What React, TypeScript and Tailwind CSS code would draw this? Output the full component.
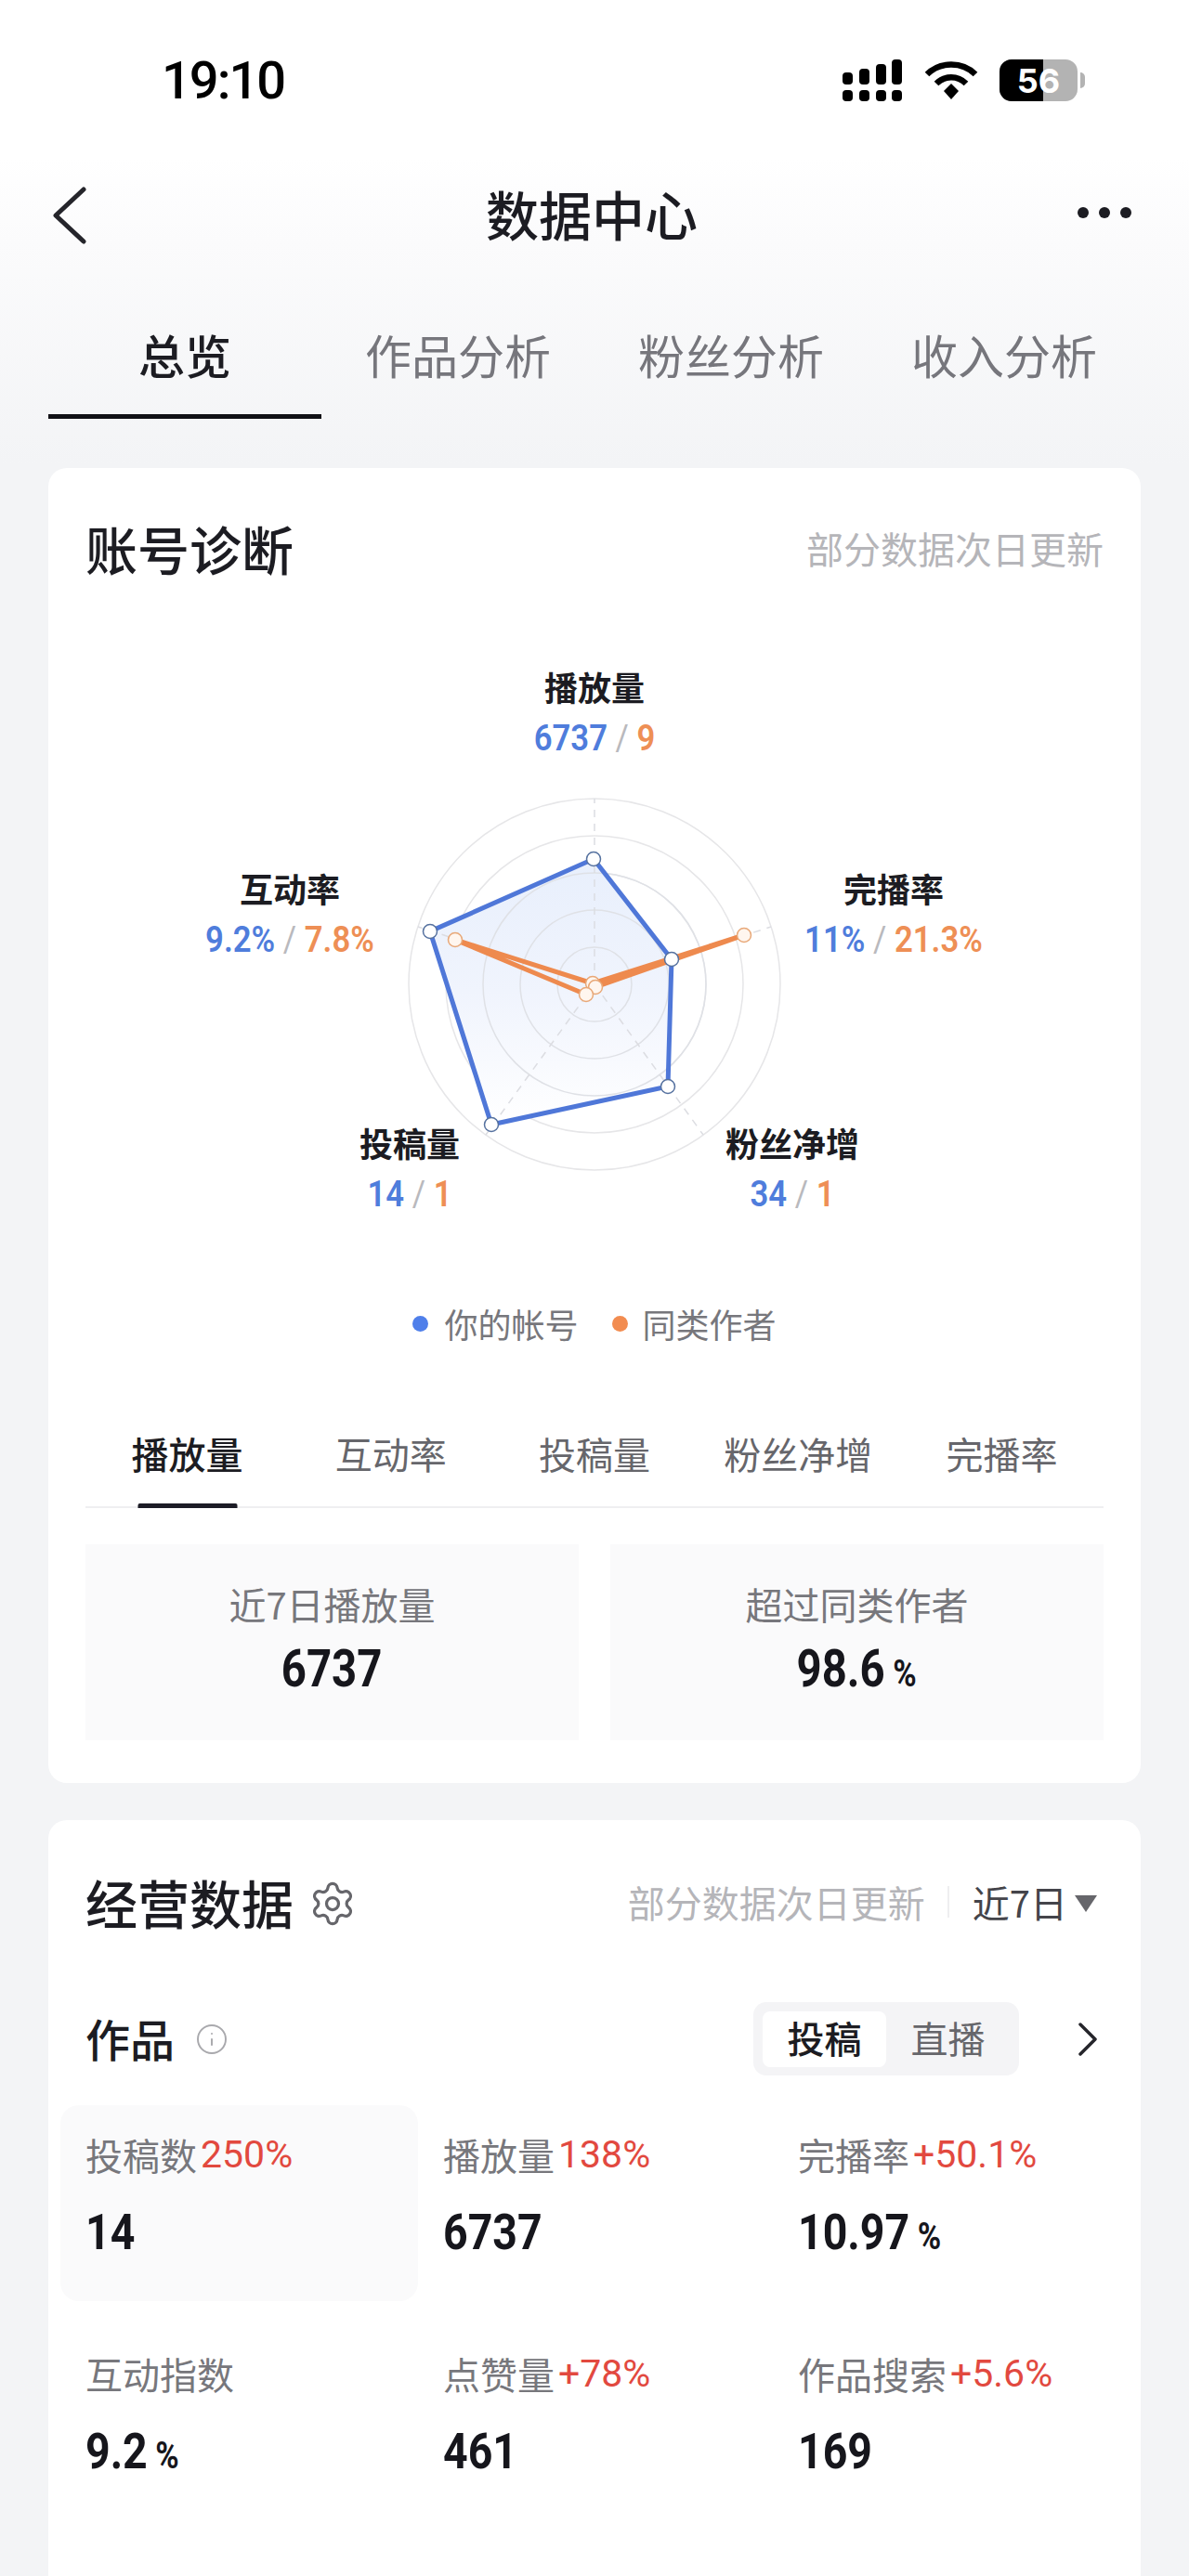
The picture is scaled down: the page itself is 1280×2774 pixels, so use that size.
import { Info, Settings } from "lucide-react";

const cjk = "font-['Noto_Sans_CJK_SC','Noto_Sans',sans-serif]";
// the app uses a condensed number face; Roboto squeezed on x gets close
const num = "font-['Roboto','Noto_Sans_CJK_SC',sans-serif]";

const mainTabs = ["总览", "作品分析", "粉丝分析", "收入分析"];
const subTabs = ["播放量", "互动率", "投稿量", "粉丝净增", "完播率"];

const metrics = [
  { label: "投稿数", delta: "250%", value: "14", active: true },
  { label: "播放量", delta: "138%", value: "6737" },
  { label: "完播率", delta: "+50.1%", value: "10.97", unit: "%" },
  { label: "互动指数", delta: "", value: "9.2", unit: "%" },
  { label: "点赞量", delta: "+78%", value: "461" },
  { label: "作品搜索", delta: "+5.6%", value: "169" },
];

// radar node coordinates, read off the screenshot
const bluePts = [
  [639, 925],
  [723, 1033],
  [719, 1170],
  [529, 1211],
  [463, 1003],
];
const orangePts = [
  [638, 1059],
  [801, 1007],
  [641, 1063],
  [631, 1071],
  [490, 1012],
];
const axisEnds = [
  [640, 860],
  [830, 998],
  [757, 1222],
  [523, 1222],
  [450, 998],
];

const toPoints = (pts: number[][]) => pts.map((p) => p.join(",")).join(" ");

function StatusBar() {
  return (
    <div className="relative flex h-[170px] items-center justify-between bg-white pl-[174px] pr-[112px] pt-[3px]">
      <span className="font-['Roboto',sans-serif] text-[56px] leading-none font-medium tracking-[-2px] text-black">19:10</span>
      <div className="flex items-center">
        <svg width="66" height="46" viewBox="0 0 66 46" fill="#000">
          <rect x="1" y="14" width="11" height="13" rx="4" />
          <rect x="19" y="10" width="11" height="17" rx="4" />
          <rect x="37" y="5" width="11" height="22" rx="4" />
          <rect x="54" y="0" width="11" height="27" rx="4" />
          <rect x="1" y="33" width="11" height="12" rx="4" />
          <rect x="19" y="33" width="11" height="12" rx="4" />
          <rect x="37" y="33" width="11" height="12" rx="4" />
          <rect x="54" y="33" width="11" height="12" rx="4" />
        </svg>
        <svg width="58" height="44" viewBox="0 0 58 44" fill="none" stroke="#000" className="ml-[23px]">
          <path d="M3 15 C17 1 41 1 55 15" strokeWidth="6.5" />
          <path d="M13 25 C22 16 36 16 45 25" strokeWidth="6.5" />
          <path d="M21 33 L29 25 L37 33 L29 42 Z" fill="#000" stroke="none" />
        </svg>
        <div className="relative ml-[23px] flex h-[45px] w-[84px] items-center justify-center overflow-hidden rounded-[13px] bg-[#b3b3b3]">
          <div className="absolute inset-y-0 left-0 w-[47px] bg-black" />
          <span className="relative font-['Inter',sans-serif] text-[36px] leading-none font-bold text-white">56</span>
        </div>
        <div className="ml-[3px] h-[17px] w-[5px] rounded-r-full bg-[#b3b3b3]" />
      </div>
    </div>
  );
}

function Radar() {
  return (
    <svg width="500" height="460" viewBox="390 830 500 460" className="absolute left-[298px] top-[148px]">
      <defs>
        <linearGradient id="radarFill" x1="0" y1="0" x2="0" y2="1">
          <stop offset="0" stopColor="#e8effc" />
          <stop offset="0.5" stopColor="#f0f4fd" />
          <stop offset="1" stopColor="#ffffff" />
        </linearGradient>
      </defs>
      {[40, 80, 120, 160, 200].map((r) => (
        <circle key={r} cx="640" cy="1060" r={r} fill="none" stroke="#e6e6e8" strokeWidth="1.5" />
      ))}
      <polygon points={toPoints(bluePts)} fill="url(#radarFill)" />
      {[40, 80, 120].map((r) => (
        <circle key={r} cx="640" cy="1060" r={r} fill="none" stroke="#dfe1e6" strokeWidth="1.5" />
      ))}
      {axisEnds.map(([x, y]) => (
        <line key={x} x1="640" y1="1060" x2={x} y2={y} stroke="#dcdde2" strokeWidth="1.5" strokeDasharray="8 7" />
      ))}
      <polygon points={toPoints(bluePts)} fill="none" stroke="#4f77d8" strokeWidth="5" />
      <polygon points={toPoints(orangePts)} fill="none" stroke="#ee8a4e" strokeWidth="5" strokeLinejoin="round" />
      {orangePts.map(([x, y]) => (
        <circle key={x} cx={x} cy={y} r="7.5" fill="#fff6ef" stroke="#e8a878" strokeWidth="1.5" />
      ))}
      {bluePts.map(([x, y]) => (
        <circle key={x} cx={x} cy={y} r="7.5" fill="#ffffff" stroke="#55719f" strokeWidth="1.5" />
      ))}
    </svg>
  );
}

function RadarLabel({ name, a, b, className }: { name: string; a: string; b: string; className: string }) {
  return (
    <div className={`absolute -translate-x-1/2 whitespace-nowrap text-center ${className}`}>
      <div className={`${cjk} h-[52px] text-[36px] leading-[52px] font-bold text-[#1c1c22]`}>{name}</div>
      <div className={`${num} mt-[4px] h-[52px] scale-x-[0.89] text-[39px] leading-[52px] font-semibold`}>
        <span className="text-[#4f7ddc]">{a}</span>
        <span className="font-normal text-[#b9b9bd]"> / </span>
        <span className="text-[#ee8f55]">{b}</span>
      </div>
    </div>
  );
}

export default function App() {
  return (
    <div className={`${cjk} flex h-[2774px] w-[1280px] flex-col overflow-hidden bg-[linear-gradient(to_bottom,#ffffff_170px,#fbfbfc_260px,#f3f4f6_500px)]`}>
      <StatusBar />

      {/* nav bar */}
      <div className="grid h-[124px] grid-cols-[1fr_auto_1fr] items-center pl-[56px] pr-[62px]">
        <svg width="38" height="62" viewBox="0 0 38 62" fill="none" stroke="#25252b" strokeWidth="5" strokeLinecap="round" strokeLinejoin="round">
          <path d="M34 3 L4 31 L34 59" />
        </svg>
        <span className="pb-[6px] text-[57px] leading-none font-medium text-[#1c1c22]">数据中心</span>
        <svg width="58" height="14" viewBox="0 0 58 14" fill="#1c1c22" className="mb-[6px] justify-self-end">
          <circle cx="6" cy="7" r="6" />
          <circle cx="29" cy="7" r="6" />
          <circle cx="52" cy="7" r="6" />
        </svg>
      </div>

      {/* main tabs */}
      <div className="mx-[52px] grid h-[157px] grid-cols-4">
        {mainTabs.map((tab, i) => (
          <div key={tab} className="relative flex items-start justify-center pt-[57px]">
            <span className={`text-[50px] leading-[60px] ${i === 0 ? "font-medium text-[#1c1c22]" : "text-[#76767c]"}`}>{tab}</span>
            {i === 0 && <div className="absolute inset-x-0 bottom-0 h-[5px] bg-[#111116]" />}
          </div>
        ))}
      </div>

      {/* 账号诊断 */}
      <section className="mx-[52px] mt-[53px] h-[1416px] rounded-[20px] bg-white px-[40px]">
        <div className="flex h-[178px] items-center justify-between pb-[6px]">
          <h2 className="text-[56px] leading-none font-medium text-[#1c1c22]">账号诊断</h2>
          <span className="text-[40px] leading-none text-[#b5b5b9]">部分数据次日更新</span>
        </div>

        <div className="relative flex h-[818px] flex-col justify-end pb-[50px]">
          <Radar />
          <RadarLabel name="播放量" a="6737" b="9" className="left-[548px] top-[31px]" />
          <RadarLabel name="互动率" a="9.2%" b="7.8%" className="left-[220px] top-[248px]" />
          <RadarLabel name="完播率" a="11%" b="21.3%" className="left-[870px] top-[248px]" />
          <RadarLabel name="投稿量" a="14" b="1" className="left-[349px] top-[522px]" />
          <RadarLabel name="粉丝净增" a="34" b="1" className="left-[761px] top-[522px]" />

          <div className="relative flex h-[50px] items-center justify-center text-[36px] leading-none text-[#77777c]">
            <span className="h-[17px] w-[17px] rounded-full bg-[#4f7fea]" />
            <span className="ml-[17px]">你的帐号</span>
            <span className="ml-[36px] h-[17px] w-[17px] rounded-full bg-[#f28c50]" />
            <span className="ml-[16px]">同类作者</span>
          </div>
        </div>

        <div className="mt-[10px] grid h-[114px] grid-cols-5 border-b-2 border-[#efeff1]">
          {subTabs.map((tab, i) => (
            <div key={tab} className="relative flex items-center justify-center pb-[3px]">
              <span className={`text-[40px] leading-none ${i === 0 ? "font-medium text-[#1c1c22]" : "text-[#66666b]"}`}>{tab}</span>
              {i === 0 && <div className="absolute bottom-[-2px] left-1/2 h-[5px] w-[107px] -translate-x-1/2 rounded-t-[2px] bg-[#1c1c26]" />}
            </div>
          ))}
        </div>

        <div className="mt-[39px] grid h-[211px] grid-cols-2 gap-[34px]">
          <div className="flex flex-col items-center justify-center gap-[20px] bg-[#fafafb] pb-[4px]">
            <span className="h-[40px] text-[40px] leading-[40px] text-[#77777c]">近7日播放量</span>
            <span className={`${num} h-[60px] scale-x-[0.86] text-[55px] leading-[60px] font-bold text-[#16161c]`}>6737</span>
          </div>
          <div className="flex flex-col items-center justify-center gap-[20px] bg-[#fafafb] pb-[4px]">
            <span className="h-[40px] text-[40px] leading-[40px] text-[#77777c]">超过同类作者</span>
            <span className={`${num} h-[60px] scale-x-[0.86] text-[55px] leading-[60px] font-bold text-[#16161c]`}>
              98.6<span className="ml-[10px] text-[40px]">%</span>
            </span>
          </div>
        </div>
      </section>

      {/* 经营数据 */}
      <section className="mx-[52px] mt-[40px] flex-1 rounded-t-[20px] bg-white px-[40px]">
        <div className="flex h-[180px] items-center pb-[4px]">
          <h2 className="text-[56px] leading-none font-medium text-[#1c1c22]">经营数据</h2>
          <Settings size={52} strokeWidth={1.5} className="ml-[16px] mt-[3px] text-[#66666b]" />
          <span className="ml-auto text-[40px] leading-none text-[#b5b5b9]">部分数据次日更新</span>
          <div className="ml-[24px] h-[34px] w-[2px] bg-[#eeeef0]" />
          <span className="ml-[25px] text-[40px] leading-none text-[#44444a]">近7日</span>
          <svg width="24" height="20" viewBox="0 0 24 20" fill="#66666b" className="ml-[8px] mr-[7px] mt-[4px]">
            <path d="M0 1 H24 L12 19 Z" />
          </svg>
        </div>

        <div className="mt-[16px] flex h-[79px] items-center">
          <h3 className="pb-[4px] text-[48px] leading-none font-medium text-[#1c1c22]">作品</h3>
          <Info size={36} strokeWidth={1.3} className="ml-[22px] text-[#a9a9ad]" />
          <div className="ml-auto flex h-[79px] w-[286px] items-center rounded-[14px] bg-[#f4f4f6] pl-[10px]">
            <div className="flex h-[60px] w-[133px] items-center justify-center rounded-[8px] bg-white pb-[3px] text-[40px] leading-none font-medium text-[#1c1c22]">投稿</div>
            <div className="flex h-[60px] w-[133px] items-center justify-center pb-[3px] text-[40px] leading-none text-[#66666b]">直播</div>
          </div>
          <svg width="22" height="36" viewBox="0 0 22 36" fill="none" stroke="#25252b" strokeWidth="3.5" strokeLinecap="round" strokeLinejoin="round" className="ml-[63px] mr-[6px]">
            <path d="M3 2 L19 18 L3 34" />
          </svg>
        </div>

        <div className="-ml-[27px] mt-[32px] grid grid-cols-[385px_382px_382px] gap-y-[25px]">
          {metrics.map((m) => (
            <div key={m.label} className={`h-[211px] rounded-[20px] pl-[27px] pt-[33px] ${m.active ? "bg-[#fafafb]" : ""}`}>
              <div className="flex h-[40px] items-center whitespace-nowrap text-[40px] leading-none text-[#77777c]">
                <span>{m.label}</span>
                {m.delta && <span className={`${num} ml-[4px] text-[41px] text-[#e2493f]`}>{m.delta}</span>}
              </div>
              <div className={`${num} mt-[34px] h-[60px] origin-left scale-x-[0.86] text-[54px] leading-[60px] font-bold text-[#16161c]`}>
                {m.value}
                {m.unit && <span className="ml-[10px] text-[40px]">{m.unit}</span>}
              </div>
            </div>
          ))}
        </div>
      </section>
    </div>
  );
}
